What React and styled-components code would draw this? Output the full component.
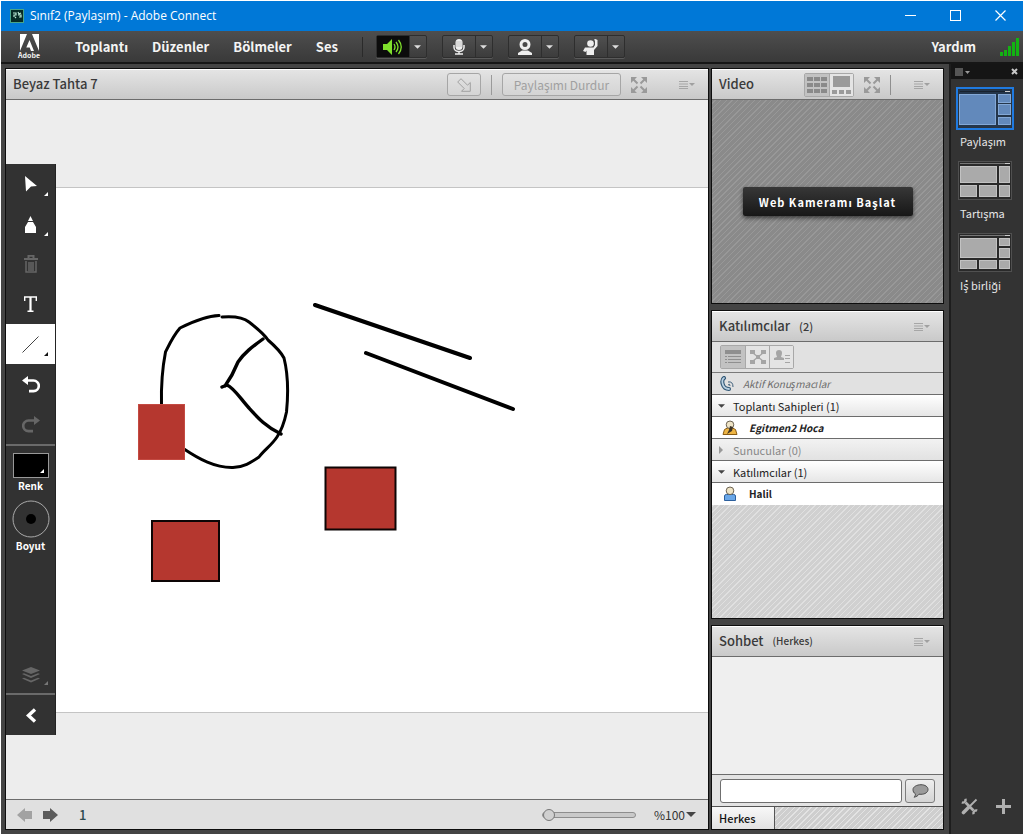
import React from 'react';
import styled, { createGlobalStyle, css } from 'styled-components';

const Global = createGlobalStyle`
  * { box-sizing: border-box; }
  html, body { margin: 0; padding: 0; }
  body { background: #fff; font-family: "Noto Sans CJK SC", "Noto Sans", sans-serif; font-size: 12px; color: #333; }
  button, input, select { font: inherit; color: inherit; margin: 0; }
  button { background: none; border: 0; padding: 0; }
  ul { list-style: none; margin: 0; padding: 0; }
  h2 { margin: 0; }
  svg { display: block; flex: none; }
`;

const hatch = (dark, light) => css`
  background: repeating-linear-gradient(135deg, ${dark} 0 2px, ${light} 2px 3px, ${dark} 3px 4px);
`;

const Window = styled.div`
  min-height: 100vh;
  padding: 1px;
  background: #fff;
  display: flex;
  flex-direction: column;
`;
const TitleBar = styled.header`
  height: 30px;
  background: #0078d7;
  color: #fff;
  display: flex;
  align-items: center;
  gap: 6px;
  padding-left: 9px;
  font: 12px/16px "Open Sans", "Noto Sans", sans-serif;
`;
const WindowButtons = styled.div`
  display: flex;
`;
const WindowButton = styled.button`
  width: 45px;
  height: 30px;
  padding-bottom: 2px;
  display: grid;
  place-items: center;
`;
const Spacer = styled.div`flex: 1;`;
const MenuBar = styled.nav`
  height: 33px;
  background: linear-gradient(#4e4e4e, #393939);
  border-bottom: 2px solid #161616;
  display: flex;
  align-items: center;
  padding: 0 4px 0 18px;
  color: #f4f4f4;
`;
const Brand = styled.div`
  width: 20px;
  margin-right: 36px;
  display: flex;
  flex-direction: column;
  align-items: center;
  font-size: 7px;
  line-height: 8px;
  font-weight: 700;
`;
const MenuItem = styled.button`
  font-size: 13px;
  line-height: 20px;
  font-weight: 700;
  margin-right: 24px;
  color: #f4f4f4;
`;
const Divider = styled.span`
  width: 1px;
  height: 20px;
  background: ${p => p.$color || '#2a2a2a'};
`;
const Devices = styled.div`
  display: flex;
  gap: 15px;
  margin-left: 13px;
`;
const SplitButton = styled.div`
  width: 51px;
  height: 23px;
  display: flex;
  border: 1px solid #2e2e2e;
  border-radius: 2px;
  background: linear-gradient(#505050, #3c3c3c);
  box-shadow: 0 1px 0 #5a5a5a;
`;
const SplitMain = styled.button`
  width: 33px;
  display: grid;
  place-items: center;
  border-right: 1px solid #2e2e2e;
  background: ${p => (p.$on ? '#0c0c0c' : 'transparent')};
`;
const SplitArrow = styled.button`
  flex: 1;
  display: grid;
  place-items: center;
`;
const Body = styled.div`
  flex: 1;
  display: flex;
  background: #444;
`;
const Pods = styled.main`
  flex: 1;
  min-width: 0;
  display: flex;
  gap: 2px;
  padding: 4px 5px 4px 4px;
`;
const Column = styled.div`
  width: 233px;
  display: flex;
  flex-direction: column;
  gap: 6px;
`;
const Pod = styled.section`
  border: 1px solid #0d0d0d;
  display: flex;
  flex-direction: column;
  min-width: 0;
  flex: ${p => p.$flex || '1'};
  background: ${p => p.$bg || '#ededed'};
`;
const PodHeader = styled.header`
  height: 31px;
  flex: none;
  display: flex;
  align-items: center;
  padding: 0 13px 0 7px;
  background: linear-gradient(#e4e4e4, #c9c9c9);
  border-top: 1px solid #fff;
  border-bottom: 1px solid #6c6c6c;
`;
const PodTitle = styled.h2`
  font-size: 13px;
  line-height: 20px;
  padding-bottom: 2px;
  font-weight: 500;
  color: #3a3a3a;
`;
const PodCount = styled.span`
  font-size: ${p => (p.$small ? 10 : 11)}px;
  line-height: 20px;
  padding-bottom: 2px;
  font-weight: 500;
  margin-left: 9px;
  color: #3a3a3a;
`;
const OutlineButton = styled.button`
  height: 23px;
  width: ${p => p.$w}px;
  border: 1px solid #a6a6a6;
  border-radius: 3px;
  background: linear-gradient(#e2e2e2, #d4d4d4);
  color: #a0a0a0;
  display: grid;
  place-items: center;
  white-space: nowrap;
`;
const HeaderTools = styled.div`
  display: flex;
  align-items: center;
  gap: ${p => p.$gap || 10}px;
`;
const PodMenu = styled.button`
  width: 16px;
  margin-left: ${p => p.$ml || 0}px;
`;

const Stage = styled.div`
  flex: 1;
  display: flex;
  align-items: center;
  background: #ededed;
`;
const ToolStrip = styled.div`
  width: 50px;
  height: 571px;
  background: #323232;
  border-right: 1px solid #232323;
  display: flex;
  flex-direction: column;
  color: #fff;
`;
const Tool = styled.button`
  height: ${p => (p.$short ? 36 : 40)}px;
  flex: none;
  display: grid;
  place-items: center;
  position: relative;
  color: ${p => (p.$off ? '#666' : '#fff')};
  background: ${p => (p.$active ? '#fff' : 'transparent')};
  ${p => p.$flyout && css`
    &::after {
      content: '';
      position: absolute;
      right: 7px;
      bottom: 8px;
      border: 2px solid transparent;
      border-right-color: ${p.$active ? '#111' : p.$off ? '#777' : '#fff'};
      border-bottom-color: ${p.$active ? '#111' : p.$off ? '#777' : '#fff'};
    }
  `}
`;
const StripRule = styled.div`
  height: 2px;
  flex: none;
  background: #6a6a6a;
`;
const Picker = styled.button`
  display: flex;
  flex-direction: column;
  align-items: center;
  gap: 1px;
  font-size: 10px;
  line-height: 14px;
  font-weight: 700;
  color: #fff;
  margin-top: 7px;
`;
const Board = styled.div`
  flex: 1;
  height: 526px;
  background: #fff;
  border: solid #c4c4c4;
  border-width: 1px 0;
`;
const StageFooter = styled.footer`
  height: 30px;
  flex: none;
  display: flex;
  align-items: center;
  padding: 0 12px 0 11px;
  background: #e0e0e0;
  border-top: 1px solid #6c6c6c;
`;
const PageButton = styled.button`
  width: 16px;
  margin-right: 10px;
`;
const PageNumber = styled.span`
  margin-left: 10px;
  font-size: 13px;
  font-weight: 500;
  color: #2d4a4e;
`;
const ZoomSlider = styled.input`
  appearance: none;
  width: 94px;
  height: 14px;
  background: transparent;
  margin-right: 18px;
  &::-webkit-slider-runnable-track {
    height: 6px;
    border: 1px solid #8d8d8d;
    border-radius: 3px;
    background: #c9c9c9;
  }
  &::-webkit-slider-thumb {
    appearance: none;
    width: 12px;
    height: 12px;
    margin-top: -4px;
    border: 1px solid #777;
    border-radius: 6px;
    background: #d0d0d0;
  }
`;
const ZoomSelect = styled.select`
  appearance: none;
  border: 0;
  padding: 0;
  background: none;
  width: 32px;
  font-size: 12px;
  line-height: 16px;
`;

const VideoArea = styled.div`
  flex: 1;
  display: flex;
  justify-content: center;
  align-items: center;
  ${hatch('#8a8a8a', '#989898')}
`;
const CameraButton = styled.button`
  width: 170px;
  height: 29px;
  border-radius: 2px;
  background: linear-gradient(#373737, #171717);
  box-shadow: 0 2px 4px #0009;
  color: #fff;
  font-size: 11px;
  font-weight: 700;
  letter-spacing: 1px;
  white-space: nowrap;
`;
const Toggle = styled.div`
  display: flex;
  border: 1px solid #a8a8a8;
  border-radius: 2px;
`;
const ToggleButton = styled.button`
  width: 24px;
  height: 22px;
  display: grid;
  place-items: center;
  background: ${p => (p.$on ? '#c2c2c2' : '#e4e4e4')};
  & + & { border-left: 1px solid #a8a8a8; }
`;
const ViewBar = styled.div`
  height: 31px;
  flex: none;
  padding: 0 8px;
  display: flex;
  align-items: center;
  background: #e1e1e1;
  border-bottom: 1px solid #7a7a7a;
`;
const Roster = styled.ul`
  flex: 1;
  ${hatch('#d0d0d0', '#e0e0e0')}
`;
const RosterRow = styled.li`
  height: 22px;
  display: flex;
  align-items: center;
  padding-left: ${p => p.$indent || 10}px;
  gap: ${p => p.$gap || 11}px;
  border-bottom: 1px solid ${p => (p.$last ? '#fff' : '#6c6c6c')};
  background: ${p => p.$bg || '#fff'};
  font-size: ${p => p.$size || 10}px;
  line-height: 16px;
  font-weight: ${p => p.$weight || 700};
  font-style: ${p => (p.$italic ? 'italic' : 'normal')};
  color: ${p => p.$color || '#222'};
`;
const GroupToggle = styled.button`
  display: flex;
  align-items: center;
  gap: 8px;
`;
const ChatLog = styled.div`
  flex: 1;
  background: #efefef;
  border-bottom: 1px solid #6c6c6c;
`;
const ChatForm = styled.form`
  height: 32px;
  flex: none;
  display: flex;
  align-items: center;
  gap: 3px;
  padding: 0 8px;
  background: #e3e3e3;
  border-bottom: 1px solid #555;
`;
const ChatInput = styled.input`
  flex: 1;
  min-width: 0;
  height: 24px;
  border: 1px solid #6f6f6f;
  border-radius: 3px;
  background: #fff;
  padding: 0 4px;
`;
const SendButton = styled.button`
  width: 30px;
  height: 24px;
  border: 1px solid #7d7d7d;
  border-radius: 3px;
  background: linear-gradient(#efefef, #d4d4d4);
  display: grid;
  place-items: center;
`;
const TabBar = styled.div`
  height: 22px;
  flex: none;
  display: flex;
  ${hatch('#cecece', '#e3e3e3')}
`;
const Tab = styled.button`
  width: 63px;
  padding-left: 7px;
  text-align: left;
  font-size: 11px;
  line-height: 16px;
  font-weight: 500;
  color: #111;
  background: linear-gradient(#f8f8f8, #e2e2e2);
  border-right: 1px solid #555;
`;

const Layouts = styled.aside`
  width: 74px;
  background: #333;
  border-left: 2px solid #1d1d1d;
  display: flex;
  flex-direction: column;
`;
const LayoutsBar = styled.div`
  height: 15px;
  background: #151515;
  display: flex;
  justify-content: space-between;
  align-items: center;
  padding: 0 5px 0 4px;
`;
const LayoutList = styled.div`
  flex: 1;
  display: flex;
  flex-direction: column;
  gap: 9px;
  padding: 8px 5px;
`;
const LayoutButton = styled.button`
  display: flex;
  flex-direction: column;
  align-items: flex-start;
  gap: 2px;
  color: #e6e6e6;
  font-size: 11px;
  line-height: 18px;
  svg {
    outline: 2px solid ${p => (p.$active ? '#1f7ae0' : 'transparent')};
    outline-offset: -2px;
  }
  span { padding-left: 4px; }
`;
const LayoutActions = styled.div`
  display: flex;
  gap: 18px;
  padding: 0 0 19px 10px;
`;

const Caret = ({ color = '#ddd', w = 7 }) => (
  <svg width={w} height={w > 8 ? 5 : 4} viewBox="0 0 8 4"><path d="M0 0h8L4 4z" fill={color} /></svg>
);
const MenuGlyph = () => (
  <svg width="16" height="8" viewBox="0 0 16 8">
    <path d="M0 .5h9M0 3h9M0 5.5h9M0 7.5h9" stroke="#a6a6a6" />
    <path d="M10 2h6l-3 3z" fill="#a0a0a0" />
  </svg>
);
const Expand = () => (
  <svg width="16" height="16" viewBox="0 0 16 16" fill="#9a9a9a" stroke="#9a9a9a" strokeWidth="2">
    <path d="M0 0h6L0 6zM16 0v6l-6-6zM0 16v-6l6 6zM16 16h-6l6-6z" stroke="none" />
    <path d="M2 2l4.500 4.500M14 2L9.500 6.500M2 14l4.500-4.500M14 14L9.500 9.500" />
  </svg>
);
const Person = ({ body, edge, host }) => (
  <svg width="16" height="16" viewBox="0 0 16 16">
    {host
      ? <path d="M1 14.500L2.500 9.500L5.500 8h5l3 1.500l1.500 5z" fill={body} stroke={edge} />
      : <path d="M2.500 14.500V10q0-1.500 2-1.500h7q2 0 2 1.500v4.500z" fill={body} stroke={edge} />}
    <circle cx="8" cy="4.800" r="3.800" fill="#efe4c6" stroke="#6b6252" />
    {host && <path d="M8 6l3 1-1 4-5 3 2-4z" fill="#3d3426" />}
  </svg>
);
const Thumb = ({ panes, active }) => (
  <svg width="58" height="43" viewBox="0 0 58 43">
    <rect x="2.500" y="2.500" width="53" height="38" fill={active ? '#24364b' : '#2a2a2a'} stroke={active ? 'none' : '#505050'} />
    <path d="M4 4.500h50" stroke={active ? '#18222e' : '#777'} />
    <path d="M49 4.500h5" stroke="#ccc" />
    {panes.map(([x, y, w, h]) => (
      <rect key={`${x}-${y}`} x={x} y={y} width={w} height={h}
        fill={active ? '#6289bb' : '#aaa'} stroke={active ? '#83a8d6' : '#c2c2c2'} />
    ))}
  </svg>
);

const layouts = [
  { name: 'Paylaşım', active: true, panes: [[3.5, 7.500, 36, 30], [42.5, 7.500, 12, 8], [42.5, 17.500, 12, 10], [42.5, 30.500, 12, 7]] },
  { name: 'Tartışma', panes: [[4.5, 7.500, 36, 16], [43.5, 7.500, 10, 16], [4.5, 26.500, 16, 11], [23.5, 26.500, 17, 11], [43.5, 26.500, 10, 11]] },
  { name: 'İş birliği', panes: [[4.5, 7.500, 36, 19], [43.5, 7.500, 10, 7], [43.5, 17.500, 10, 9], [4.5, 29.500, 16, 8], [23.5, 29.500, 17, 8], [43.5, 29.500, 10, 8]] },
];

const devices = [
  { label: 'Hoparlör', on: true, icon: (
    <svg width="19" height="16" viewBox="0 0 19 16">
      <path d="M0 5h4l5-5v16l-5-5H0z" fill="#7fe02c" />
      <path d="M11 5q2 3 0 6M13 3q4 5 0 10M15.500 1q5.500 7 0 14" fill="none" stroke="#7fe02c" strokeWidth="1.300" />
    </svg>) },
  { label: 'Mikrofon', icon: (
    <svg width="12" height="16" viewBox="0 0 12 16">
      <rect x="2.500" y="0" width="7" height="11" rx="3.500" fill="#eee" />
      <path d="M3 3h6M3 5h6M3 7h6" stroke="#999" strokeWidth=".5" />
      <path d="M1 6v2.500a5 4 0 0 0 10 0V6M6 12v3M2 15h8" fill="none" stroke="#eee" strokeWidth="1.500" />
    </svg>) },
  { label: 'Kamera', icon: (
    <svg width="14" height="16" viewBox="0 0 14 16">
      <circle cx="7" cy="5.500" r="4" fill="none" stroke="#eee" strokeWidth="3" />
      <path d="M4 11.500h6l4 2.500v2H0v-2z" fill="#eee" />
    </svg>) },
  { label: 'El kaldır', icon: (
    <svg width="15" height="16" viewBox="0 0 15 16">
      <circle cx="7.500" cy="4.500" r="3.300" fill="#eee" />
      <path d="M2 8.500h8.500L12 6V2l-1-1.500L12.500 0 14.500 1v6L11 11v5H3.500v-4.500L2.500 13 0 12z" fill="#eee" />
    </svg>) },
];

export default function App() {
  return (
    <>
      <Global />
      <Window>
        <TitleBar>
          <svg width="14" height="14" viewBox="0 0 14 14">
            <rect x=".5" y=".5" width="13" height="13" fill="#062b25" stroke="#47a58a" />
            <path d="M3 4h3v2H4v2M8 3l1 2 2-1M8 6h3v2H9M5 8l1 1" fill="none" stroke="#b9e8d4" strokeWidth="1.200" />
          </svg>
          <span>Sınıf2 (Paylaşım) - Adobe Connect</span>
          <Spacer />
          <WindowButtons>
            <WindowButton aria-label="Küçült"><svg width="11" height="11"><path d="M0 5.500h11" stroke="#fff" /></svg></WindowButton>
            <WindowButton aria-label="Büyüt"><svg width="11" height="11"><rect x=".5" y=".5" width="10" height="10" fill="none" stroke="#fff" /></svg></WindowButton>
            <WindowButton aria-label="Kapat"><svg width="11" height="11"><path d="M.5.500l10 10M10.500.500l-10 10" stroke="#fff" strokeWidth="1.200" /></svg></WindowButton>
          </WindowButtons>
        </TitleBar>

        <MenuBar>
          <Brand>
            <svg width="19" height="17" viewBox="0 0 19 17" fill="#fff">
              <path d="M0 0h7L0 17zM12 0h7v17zM9.500 6l4.500 11h-3l-1.300-3.500H6.300z" />
            </svg>
            Adobe
          </Brand>
          {['Toplantı', 'Düzenler', 'Bölmeler', 'Ses'].map(t => <MenuItem key={t}>{t}</MenuItem>)}
          <Divider />
          <Devices>
            {devices.map(d => (
              <SplitButton key={d.label}>
                <SplitMain $on={d.on} aria-label={d.label}>{d.icon}</SplitMain>
                <SplitArrow aria-label={`${d.label} seçenekleri`}><Caret /></SplitArrow>
              </SplitButton>
            ))}
          </Devices>
          <Spacer />
          <MenuItem>Yardım</MenuItem>
          <svg width="19" height="18" viewBox="0 0 19 18" fill="#12b312">
            <path d="M0 14h3v4H0zM4 12h3v6H4zM8 8h3v10H8zM12 4h3v14h-3zM16 0h3v18h-3z" />
          </svg>
        </MenuBar>

        <Body>
          <Pods>
            <Pod>
              <PodHeader>
                <PodTitle>Beyaz Tahta 7</PodTitle>
                <Spacer />
                <HeaderTools>
                  <OutlineButton $w={34} aria-label="İşaretçi">
                    <svg width="14" height="14" viewBox="0 0 14 14" fill="none" stroke="#a0a0a0">
                      <path d="M4 .7L10.500 7.200 13.300 4.500V13.300H4.500L7.200 10.500.7 4z" />
                    </svg>
                  </OutlineButton>
                  <Divider $color="#9a9a9a" />
                  <OutlineButton $w={119}>Paylaşımı Durdur</OutlineButton>
                  <Expand />
                </HeaderTools>
                <PodMenu $ml={32} aria-label="Bölme seçenekleri"><MenuGlyph /></PodMenu>
              </PodHeader>
              <Stage>
                <ToolStrip>
                  <Tool $flyout aria-label="Seç"><svg width="13" height="16" viewBox="0 0 13 16"><path d="M1 0l12 10-6 .5L2 15.500z" fill="currentColor" /></svg></Tool>
                  <Tool $flyout aria-label="Kalem"><svg width="11" height="17" viewBox="0 0 11 17" fill="currentColor"><path d="M5.500 0L8 5H3zM3 6h5l3 5v6H0v-6z" /></svg></Tool>
                  <Tool $off aria-label="Sil">
                    <svg width="14" height="18" viewBox="0 0 14 18" fill="none" stroke="currentColor">
                      <path d="M4.500 3V.800h5V3M0 4h14" strokeWidth="2" />
                      <path d="M2 6v11h10V6M5 7v9M7 7v9M9 7v9" strokeWidth="1.500" />
                    </svg>
                  </Tool>
                  <Tool aria-label="Metin"><svg width="13" height="16" viewBox="0 0 13 16" fill="none" stroke="currentColor"><path d="M.7 5V1h11.600v4M3.500 15.300h6" strokeWidth="1.400" /><path d="M6.500 1v14" strokeWidth="2.200" /></svg></Tool>
                  <Tool $active $flyout aria-label="Çizgi"><svg width="17" height="17" viewBox="0 0 17 17"><path d="M.5 16.500l16-16" stroke="#444" /></svg></Tool>
                  <Tool aria-label="Geri al"><svg width="18" height="17" viewBox="0 0 18 17"><path d="M4 4.500h7.500a5.300 5.300 0 0 1 0 10.600H7" fill="none" stroke="currentColor" strokeWidth="2.600" /><path d="M0 4.500L6 0v9z" fill="currentColor" /></svg></Tool>
                  <Tool $off aria-label="Yinele"><svg width="18" height="17" viewBox="0 0 18 17"><path d="M14 4.500H6.500a5.300 5.300 0 0 0 0 10.600H11" fill="none" stroke="currentColor" strokeWidth="2.600" /><path d="M18 4.500L12 0v9z" fill="currentColor" /></svg></Tool>
                  <StripRule />
                  <Picker>
                    <svg width="36" height="25" viewBox="0 0 36 25"><rect x=".5" y=".5" width="35" height="24" fill="#000" stroke="#999" /><path d="M31 16v4h-4z" fill="#fff" /></svg>
                    Renk
                  </Picker>
                  <Picker>
                    <svg width="38" height="38" viewBox="0 0 38 38"><circle cx="19" cy="19" r="18" fill="none" stroke="#aaa" /><circle cx="19" cy="19" r="5" fill="#000" /></svg>
                    Boyut
                  </Picker>
                  <Spacer />
                  <Tool $off $flyout $short aria-label="Katmanlar">
                    <svg width="18" height="17" viewBox="0 0 18 17" fill="currentColor">
                      <path d="M9 0l9 3.500L9 7 0 3.500zM0 7l2-.8L9 9l7-2.800 2 .8-9 4zM0 11.500l2-.8 7 2.800 7-2.800 2 .8-9 4z" />
                    </svg>
                  </Tool>
                  <StripRule />
                  <Tool aria-label="Daralt"><svg width="12" height="15" viewBox="0 0 12 15"><path d="M10 1.500L3.500 7.500l6.500 6" fill="none" stroke="#fff" strokeWidth="3.400" /></svg></Tool>
                </ToolStrip>
                <Board>
                  <svg width="100%" height="100%" viewBox="56 188 652 524" preserveAspectRatio="xMinYMin meet">
                    <g fill="none" stroke="#000" strokeWidth="3" strokeLinecap="round" strokeLinejoin="round">
                      <path d="M219 315.500C205 316 188 324 180 328C173 336 169 345 165.500 352C162 370 161 385 161.500 405" />
                      <path d="M222 317C235 316 243 317 249 322C258 329 264 334 268 340C276 347 281 352 284 358C289 378 288 397 286.500 412C284 424 281 431 277 437C271 446 264 450 259 457C250 463 244 467 233 467.500C215 468 199 459 184 449" />
                      <path d="M263 339C252 347 244 353 238 362C234 372 230 379 225 386M222 387L227 385C234 388 240 398 249 408C258 418 266 427 281 434" strokeWidth="3.400" />
                      <path d="M315 305L470 358M366 353L513 409" strokeWidth="4" />
                    </g>
                    <rect x="138.500" y="404.500" width="46" height="55" fill="#b5372f" stroke="#c44a42" />
                    <g fill="#b5372f" stroke="#0d0505" strokeWidth="2">
                      <rect x="152" y="521" width="67" height="60" />
                      <rect x="325.500" y="467.500" width="70" height="62" />
                    </g>
                  </svg>
                </Board>
              </Stage>
              <StageFooter>
                <PageButton aria-label="Önceki sayfa"><svg width="15" height="14" viewBox="0 0 15 14"><path d="M0 7l8-7v3h7v8H8v3z" fill="#a2a2a2" /></svg></PageButton>
                <PageButton aria-label="Sonraki sayfa"><svg width="15" height="14" viewBox="0 0 15 14"><path d="M15 7L7 0v3H0v8h7v3z" fill="#5c5c5c" /></svg></PageButton>
                <PageNumber>1</PageNumber>
                <Spacer />
                <ZoomSlider type="range" min="0" max="100" defaultValue="0" aria-label="Yakınlaştırma" />
                <ZoomSelect aria-label="Yakınlaştırma oranı" defaultValue="100"><option value="100">%100</option></ZoomSelect>
                <Caret color="#444" w={10} />
              </StageFooter>
            </Pod>

            <Column>
              <Pod $flex="0 0 236px">
                <PodHeader>
                  <PodTitle>Video</PodTitle>
                  <Spacer />
                  <HeaderTools>
                    <Toggle>
                      <ToggleButton $on aria-label="Izgara"><svg width="20" height="16" viewBox="0 0 20 16" fill="#8a8a8a"><path d="M0 0h6v4H0zM7 0h6v4H7zM14 0h6v4h-6zM0 6h6v4H0zM7 6h6v4H7zM14 6h6v4h-6zM0 12h6v4H0zM7 12h6v4H7zM14 12h6v4h-6z" /></svg></ToggleButton>
                      <ToggleButton aria-label="Film şeridi"><svg width="20" height="18" viewBox="0 0 20 18" fill="#9a9a9a"><path d="M1 0h17v11H1zM0 14h5v4H0zM7 14h5v4H7zM14 14h5v4h-5z" /></svg></ToggleButton>
                    </Toggle>
                    <Expand />
                    <Divider $color="#8f8f8f" />
                  </HeaderTools>
                  <PodMenu $ml={23} aria-label="Bölme seçenekleri"><MenuGlyph /></PodMenu>
                </PodHeader>
                <VideoArea><CameraButton>Web Kameramı Başlat</CameraButton></VideoArea>
              </Pod>

              <Pod $flex="1">
                <PodHeader>
                  <PodTitle>Katılımcılar</PodTitle><PodCount>(2)</PodCount>
                  <Spacer />
                  <PodMenu aria-label="Bölme seçenekleri"><MenuGlyph /></PodMenu>
                </PodHeader>
                <ViewBar>
                  <Toggle>
                    <ToggleButton $on aria-label="Liste"><svg width="16" height="14" viewBox="0 0 16 14" stroke="#8f8f8f" fill="#8f8f8f"><path d="M0 0h16v4H0z" stroke="none" /><path d="M0 6.500h2M3 6.500h13M0 9.500h2M3 9.500h13M0 12.500h2M3 12.500h13" /></svg></ToggleButton>
                    <ToggleButton aria-label="Ara odalar"><svg width="16" height="14" viewBox="0 0 16 14" fill="#a5a5a5" stroke="#a5a5a5"><path d="M0 0h5v4H0zM11 0h5v4h-5zM0 10h5v4H0zM11 10h5v4h-5zM6 5h4v4H6z" stroke="none" /><path d="M3 3l10 8M13 3L3 11" strokeWidth="1.300" /></svg></ToggleButton>
                    <ToggleButton aria-label="Durum"><svg width="16" height="14" viewBox="0 0 16 14" fill="#a5a5a5"><path d="M5 0a3 3 0 0 1 3 3c0 2-1 3-1 4l3 1v2H0V8l3-1c0-1-1-2-1-4a3 3 0 0 1 3-3zM11 5h5v1h-5zM11 8h5v1h-5zM11 12h5v1h-5z" /></svg></ToggleButton>
                  </Toggle>
                </ViewBar>
                <Roster>
                  <RosterRow $bg="#e1e1e1" $indent={8} $gap={8} $weight={400} $italic $color="#6c6c6c">
                    <svg width="15" height="15" viewBox="0 0 15 15" fill="none">
                      <path d="M4 2C1 4 2 13 9 13" stroke="#2e5574" strokeWidth="4" strokeLinecap="round" />
                      <path d="M4 2C1 4 2 13 9 13" stroke="#b9d0e2" strokeWidth="1.800" strokeLinecap="round" />
                      <path d="M8 9q2-2 2 1M8 6q5-1 5 5" stroke="#3e5f7a" />
                    </svg>
                    Aktif Konuşmacılar
                  </RosterRow>
                  <RosterRow $bg="linear-gradient(#fff, #e6e6e6)" $indent={6} $size={11} $weight={400}>
                    <GroupToggle><Caret color="#444" />Toplantı Sahipleri (1)</GroupToggle>
                  </RosterRow>
                  <RosterRow $italic><Person body="#eeb544" edge="#8a5b12" host />Egitmen2 Hoca</RosterRow>
                  <RosterRow $bg="linear-gradient(#f2f2f2, #e2e2e2)" $indent={6} $size={11} $weight={400} $color="#888">
                    <GroupToggle><svg width="7" height="8"><path d="M1 0v8l4-4z" fill="#999" /></svg>Sunucular (0)</GroupToggle>
                  </RosterRow>
                  <RosterRow $bg="linear-gradient(#fff, #e6e6e6)" $indent={6} $size={11} $weight={400}>
                    <GroupToggle><Caret color="#444" />Katılımcılar (1)</GroupToggle>
                  </RosterRow>
                  <RosterRow $last><Person body="#6aa7e8" edge="#2c5f9c" />Halil</RosterRow>
                </Roster>
              </Pod>

              <Pod $flex="0 0 205px">
                <PodHeader>
                  <PodTitle>Sohbet</PodTitle><PodCount $small>(Herkes)</PodCount>
                  <Spacer />
                  <PodMenu aria-label="Bölme seçenekleri"><MenuGlyph /></PodMenu>
                </PodHeader>
                <ChatLog />
                <ChatForm onSubmit={e => e.preventDefault()}>
                  <ChatInput type="text" aria-label="Mesaj" />
                  <SendButton aria-label="Gönder">
                    <svg width="17" height="14" viewBox="0 0 17 14"><path d="M9 .7c4 0 7 2 7 4.800s-3 4.800-7 4.800l-2-.1c-1 1.500-2.500 2.500-5 3 1-1 1.500-2 1.400-3.400C1.600 8.800 1 7.400 1 5.500 1 2.700 5 .7 9 .7z" fill="#9b9b9b" stroke="#4c4c4c" /></svg>
                  </SendButton>
                </ChatForm>
                <TabBar><Tab>Herkes</Tab></TabBar>
              </Pod>
            </Column>
          </Pods>

          <Layouts>
            <LayoutsBar>
              <svg width="15" height="8" viewBox="0 0 15 8"><path d="M0 0h8v8H0z" fill="#555" /><path d="M10 3h5l-2.500 3z" fill="#999" /></svg>
              <svg width="7" height="7" viewBox="0 0 7 7"><path d="M1 1l5 5M6 1L1 6" stroke="#c8c8c8" strokeWidth="2" /></svg>
            </LayoutsBar>
            <LayoutList>
              {layouts.map(l => (
                <LayoutButton key={l.name} $active={l.active}>
                  <Thumb panes={l.panes} active={l.active} />
                  <span>{l.name}</span>
                </LayoutButton>
              ))}
            </LayoutList>
            <LayoutActions>
              <button aria-label="Ayarlar">
                <svg width="17" height="17" viewBox="0 0 17 17" fill="none" stroke="#b0b0b0">
                  <path d="M4.500 4.500l8 8" strokeWidth="2.600" />
                  <path d="M4.500 .8a3 3 0 0 1-3.700 3.700M16.200 12.500a3 3 0 0 0-3.700 3.700" strokeWidth="2.400" />
                  <path d="M15.500 1.500L9 8" strokeWidth="1.800" /><path d="M7.500 9.500l-5 5" strokeWidth="3.600" strokeLinecap="round" />
                </svg>
              </button>
              <button aria-label="Düzen ekle">
                <svg width="15" height="15" viewBox="0 0 15 15"><path d="M7.500 0v15M0 7.500h15" stroke="#b0b0b0" strokeWidth="3" /></svg>
              </button>
            </LayoutActions>
          </Layouts>
        </Body>
      </Window>
    </>
  );
}
